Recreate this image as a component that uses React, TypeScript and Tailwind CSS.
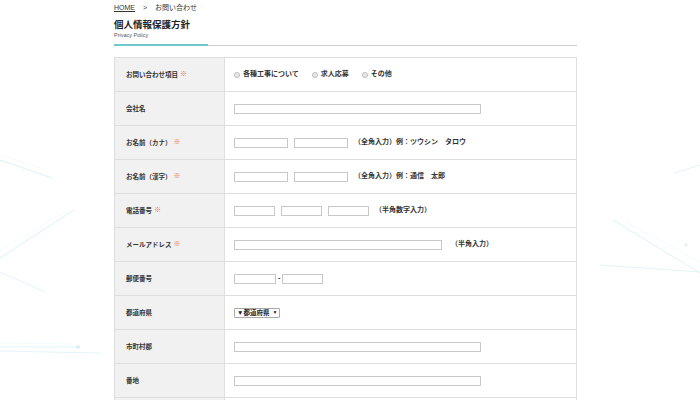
import React from "react";

const font = { fontFamily: '"Liberation Sans", "Noto Sans CJK JP", sans-serif' };

const Req = () => <span className="text-[#e8686e] text-[7px] ml-[2px]">※</span>;

const Box: React.FC<{ w: string }> = ({ w }) => (
    <span className={`inline-block h-[10px] border border-[#c8c8c8] bg-white ${w}`} />
);

const Radio: React.FC<{ label: string }> = ({ label }) => (
    <span className="flex items-center gap-[3px] mr-[13px]">
        <span className="inline-block w-[6px] h-[6px] rounded-full border border-[#bdbdbd] bg-[#e9e9e9]" />
        <span>{label}</span>
    </span>
);

const Note: React.FC<{ children: React.ReactNode; ml?: string }> = ({ children, ml = "ml-[9px]" }) => (
    <span className={`${ml} text-[#333]`}>{children}</span>
);

const rows: Array<{ key: string; label: string; req?: boolean; field: React.ReactNode }> = [
    {
        key: "type",
        label: "お問い合わせ項目",
        req: true,
        field: (
            <div className="flex items-center">
                <Radio label="各種工事について" />
                <Radio label="求人応募" />
                <Radio label="その他" />
            </div>
        ),
    },
    { key: "company", label: "会社名", field: <Box w="w-[247px]" /> },
    {
        key: "kana",
        label: "お名前（カナ）",
        req: true,
        field: (
            <div className="flex items-center gap-[6px]">
                <Box w="w-[54px]" />
                <Box w="w-[54px]" />
                <Note ml="ml-[0px]">（全角入力）例：ツウシン　タロウ</Note>
            </div>
        ),
    },
    {
        key: "kanji",
        label: "お名前（漢字）",
        req: true,
        field: (
            <div className="flex items-center gap-[6px]">
                <Box w="w-[54px]" />
                <Box w="w-[54px]" />
                <Note ml="ml-[0px]">（全角入力）例：通信　太郎</Note>
            </div>
        ),
    },
    {
        key: "tel",
        label: "電話番号",
        req: true,
        field: (
            <div className="flex items-center gap-[6px]">
                <Box w="w-[41px]" />
                <Box w="w-[41px]" />
                <Box w="w-[41px]" />
                <Note ml="ml-[0px]">（半角数字入力）</Note>
            </div>
        ),
    },
    {
        key: "mail",
        label: "メールアドレス",
        req: true,
        field: (
            <div className="flex items-center">
                <Box w="w-[208px]" />
                <Note ml="ml-[9px]">（半角入力）</Note>
            </div>
        ),
    },
    {
        key: "zip",
        label: "郵便番号",
        field: (
            <div className="flex items-center gap-[2px]">
                <Box w="w-[42px]" />
                <span>-</span>
                <Box w="w-[41px]" />
            </div>
        ),
    },
    {
        key: "pref",
        label: "都道府県",
        field: (
            <span className="inline-flex items-center h-[10px] px-[2px] border border-[#a9a9a9] rounded-[1px] bg-white text-[6.5px] text-[#222]">
                ▼都道府県 <span className="ml-[3px] text-[5px]">▼</span>
            </span>
        ),
    },
    { key: "city", label: "市町村郡", field: <Box w="w-[247px]" /> },
    { key: "addr", label: "番地", field: <Box w="w-[247px]" /> },
    { key: "bldg", label: "", field: null },
];

const Streaks = () => (
    <svg className="absolute inset-0 w-full h-full pointer-events-none" viewBox="0 0 700 400" preserveAspectRatio="none">
        <g stroke="#dcf1f5" strokeLinecap="round" fill="none">
            <line x1="0" y1="160" x2="52" y2="178" strokeWidth="1" />
            <line x1="0" y1="155" x2="40" y2="168" strokeWidth="0.6" opacity="0.6" />
            <line x1="0" y1="258" x2="74" y2="210" strokeWidth="1" />
            <line x1="0" y1="250" x2="65" y2="212" strokeWidth="0.6" opacity="0.6" />
            <line x1="0" y1="272" x2="45" y2="292" strokeWidth="0.8" />
            <line x1="0" y1="347" x2="80" y2="347" strokeWidth="0.8" />
            <line x1="0" y1="351" x2="100" y2="353" strokeWidth="0.8" />
            <line x1="0" y1="343" x2="70" y2="344" strokeWidth="0.6" opacity="0.6" />
            <line x1="675" y1="173" x2="700" y2="165" strokeWidth="0.8" />
            <line x1="613" y1="220" x2="700" y2="273" strokeWidth="1" />
            <line x1="625" y1="222" x2="700" y2="262" strokeWidth="0.6" opacity="0.6" />
            <line x1="600" y1="265" x2="700" y2="272" strokeWidth="0.8" />
        </g>
        <circle cx="78" cy="347" r="2" fill="#dcf1f5" />
        <circle cx="686" cy="245" r="1.6" fill="#dcf1f5" />
    </svg>
);

export default function App() {
    return (
        <div className="relative w-[700px] h-[400px] overflow-hidden bg-white text-[#333]" style={font}>
            <Streaks />
            <div className="relative ml-[114px] w-[463px] pt-[3px]">
                <div className="flex items-center text-[7px] h-[10px] text-[#333]">
                    <span className="underline">HOME</span>
                    <span className="ml-[8px]">&gt;</span>
                    <span className="ml-[8px]">お問い合わせ</span>
                </div>
                <div className="mt-[6px] text-[9.5px] font-bold leading-[12px] text-[#222]">個人情報保護方針</div>
                <div className="text-[5.5px] leading-[8px] text-[#555]">Privacy Policy</div>
                <div className="mt-[5px] flex items-end h-[2px]">
                    <div className="w-[94px] h-[2px] bg-[#6ec8cc]" />
                    <div className="flex-1 h-px bg-[#cfcfcf]" />
                </div>
                <div className="mt-[11px] border-t border-l border-r border-[#dedede]">
                    {rows.map((r) => (
                        <div key={r.key} className="flex h-[34px] border-b border-[#dedede] text-[7px] font-semibold">
                            <div className="w-[110px] shrink-0 bg-[#f1f1f1] border-r border-[#dedede] flex items-center pl-[11px] text-[6.5px] text-[#333]">
                                {r.label}
                                {r.req && <Req />}
                            </div>
                            <div className="flex-1 flex items-center pl-[9px] bg-white">{r.field}</div>
                        </div>
                    ))}
                </div>
            </div>
        </div>
    );
}
